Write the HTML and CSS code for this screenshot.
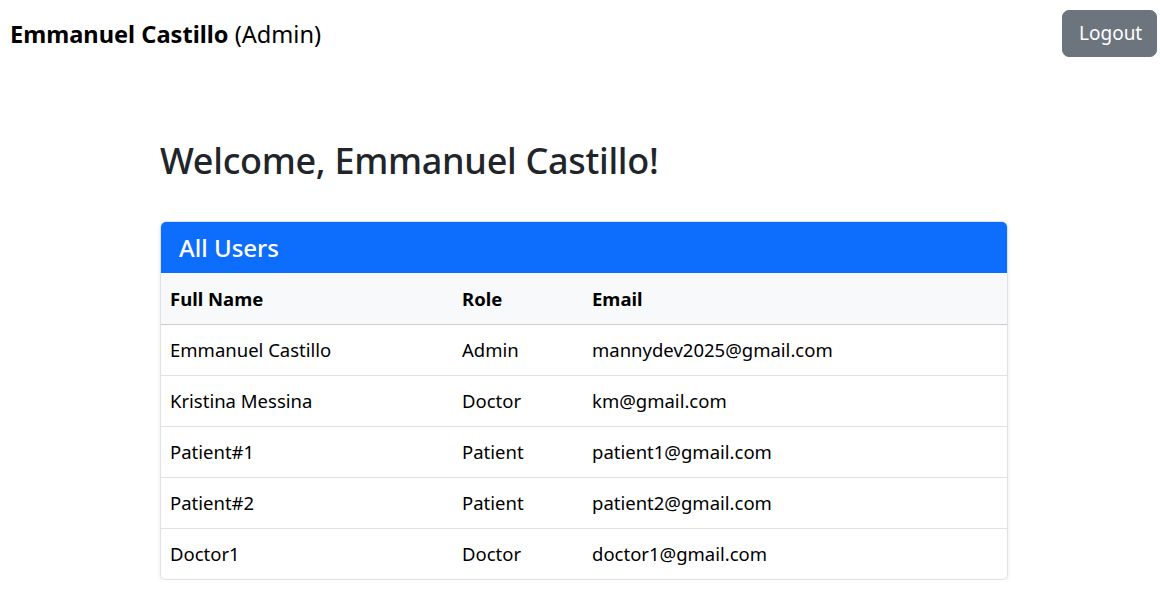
FILE: index.html
```html
<!DOCTYPE html>
<html>
<head>
<meta charset="utf-8">
<link rel="stylesheet" href="styles.css">
</head>
<body>
<header class="topbar">
  <div class="user"><strong>Emmanuel Castillo</strong> (Admin)</div>
  <button class="btn-logout">Logout</button>
</header>
<main class="content">
  <h1 class="welcome">Welcome, Emmanuel Castillo!</h1>
  <section class="card">
    <div class="card-header">All Users</div>
    <table class="users">
      <thead>
        <tr><th class="c1">Full Name</th><th class="c2">Role</th><th>Email</th></tr>
      </thead>
      <tbody>
        <tr><td>Emmanuel Castillo</td><td>Admin</td><td>mannydev2025@gmail.com</td></tr>
        <tr><td>Kristina Messina</td><td>Doctor</td><td>km@gmail.com</td></tr>
        <tr><td>Patient#1</td><td>Patient</td><td>patient1@gmail.com</td></tr>
        <tr><td>Patient#2</td><td>Patient</td><td>patient2@gmail.com</td></tr>
        <tr><td>Doctor1</td><td>Doctor</td><td>doctor1@gmail.com</td></tr>
      </tbody>
    </table>
  </section>
</main>
</body>
</html>
```
FILE: styles.css
```css
* { box-sizing: border-box; }
body {
  margin: 0;
  font-family: "Noto Sans", "Open Sans", sans-serif;
  color: #212529;
  background: #fff;
}
.topbar {
  display: flex;
  justify-content: space-between;
  align-items: center;
  padding: 10px 3px 0 10px;
}
.user {
  font-size: 23.6px;
  color: #000;
}
.user strong { font-weight: 700; }
.btn-logout {
  font-family: inherit;
  font-size: 19px;
  line-height: 29px;
  padding: 8px 16px;
  background: #6c757d;
  color: #fff;
  border: 1px solid #6c757d;
  border-radius: 7px;
  width: 95px;
}
.content {
  width: 848px;
  margin: 0 0 0 160px;
}
.welcome {
  font-size: 36px;
  font-weight: 500;
  line-height: 48px;
  margin: 80px 0 36px 0;
  letter-spacing: -0.3px;
}
.card {
  border: 1px solid #dee2e6;
  border-radius: 6px;
  box-shadow: 0 2px 4px rgba(0,0,0,0.09);
  overflow: hidden;
}
.card-header {
  background: #0d6efd;
  color: #fff;
  font-size: 24px;
  font-weight: 500;
  height: 52px;
  line-height: 54px;
  padding: 0 19px;
  margin: -1px -1px 0 -1px;
}
.users {
  width: 100%;
  border-collapse: collapse;
  font-size: 18.5px;
  color: #000;
}
.users th, .users td {
  text-align: left;
  padding: 0 9px;
  height: 51px;
  border-bottom: 1px solid #dee2e6;
}
.users tbody tr:last-child td { border-bottom: none; }
.users thead th {
  background: #f8f9fa;
  font-weight: 700;
  height: 51px;
  border-bottom: 1px solid #ccc;
}
.c1 { width: 292px; }
.c2 { width: 130px; }
```
